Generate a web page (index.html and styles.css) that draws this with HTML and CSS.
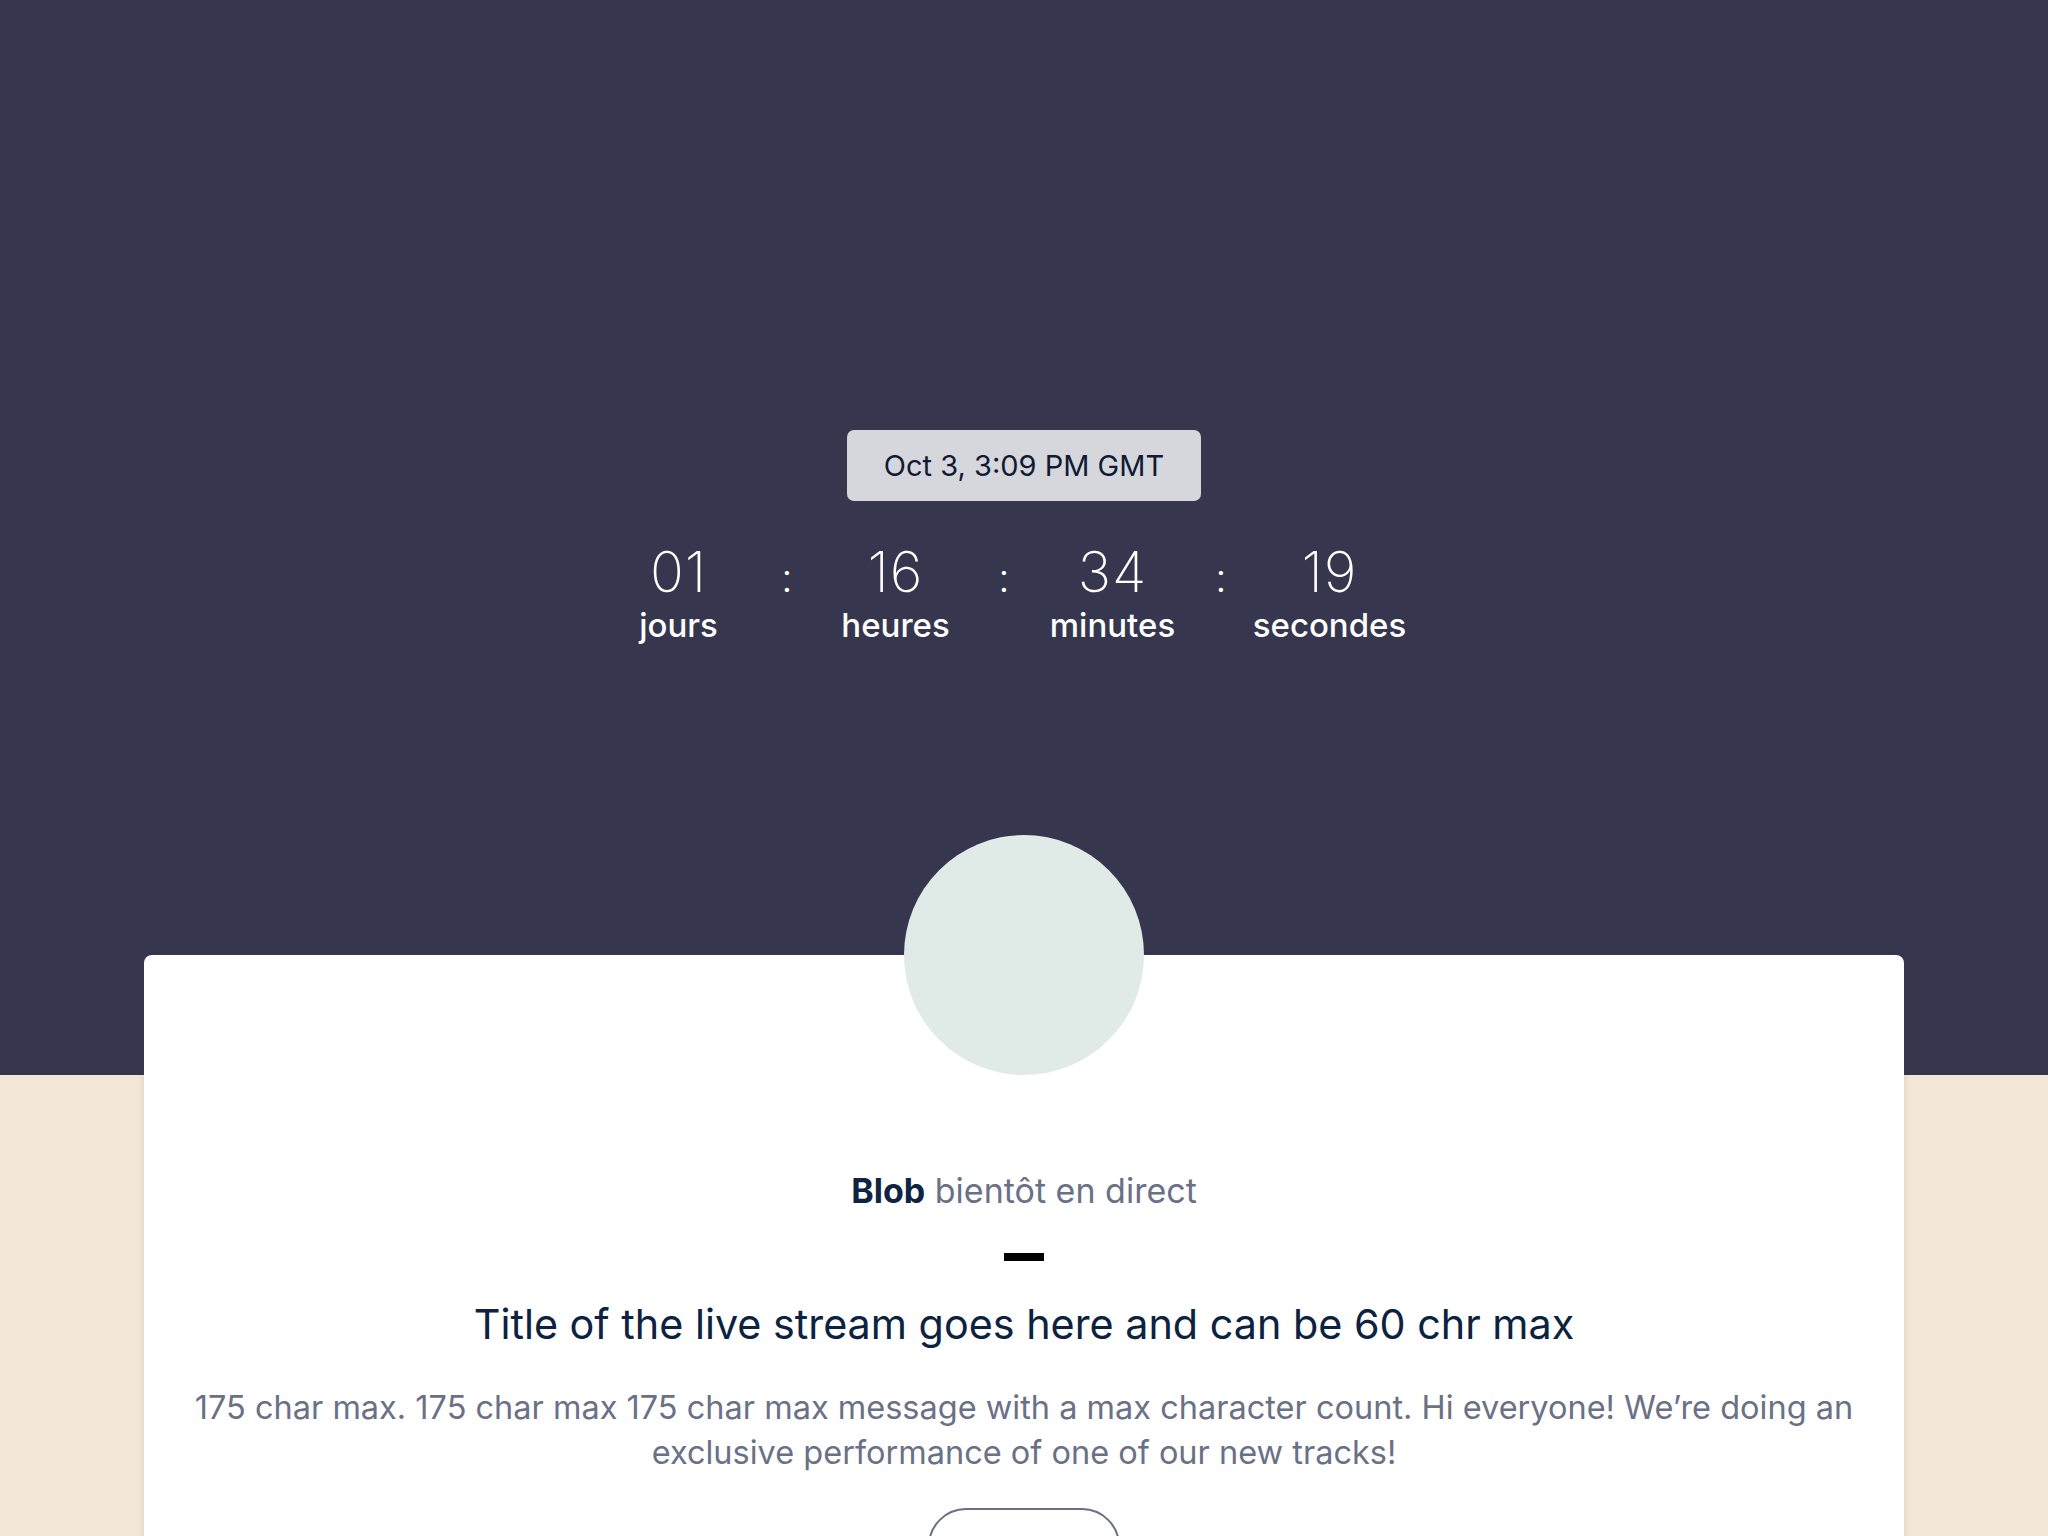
FILE: index.html
```html
<!DOCTYPE html>
<html lang="fr">
<head>
<meta charset="utf-8">
<title>Blob bientôt en direct</title>
<link rel="stylesheet" href="styles.css">
</head>
<body>
<header class="hero">
  <div class="date-pill">Oct 3, 3:09 PM GMT</div>
  <div class="countdown">
    <div class="unit"><span class="num">01</span><span class="label">jours</span></div>
    <span class="colon">:</span>
    <div class="unit"><span class="num">16</span><span class="label">heures</span></div>
    <span class="colon">:</span>
    <div class="unit"><span class="num">34</span><span class="label">minutes</span></div>
    <span class="colon">:</span>
    <div class="unit"><span class="num">19</span><span class="label">secondes</span></div>
  </div>
</header>
<main class="card">
  <div class="avatar"></div>
  <p class="host"><strong>Blob</strong> bientôt en direct</p>
  <div class="dash"></div>
  <h1 class="title">Title of the live stream goes here and can be 60 chr max</h1>
  <p class="desc">175 char max. 175 char max 175 char max message with a max character count. Hi everyone! We’re doing an exclusive performance of one of our new tracks!</p>
  <button class="btn" type="button"></button>
</main>
</body>
</html>
```
FILE: styles.css
```css
html, body {
  margin: 0;
  padding: 0;
}
body {
  background: #f2e6d7;
  font-family: Inter, "Noto Sans", sans-serif;
  overflow: hidden;
  height: 1536px;
}
.hero {
  background: #36374f;
  height: 1075px;
  display: flex;
  flex-direction: column;
  align-items: center;
  padding-top: 430px;
  box-sizing: border-box;
}
.date-pill {
  background: #d6d7dc;
  color: #101a33;
  border-radius: 7px;
  width: 354px;
  height: 71px;
  display: flex;
  align-items: center;
  justify-content: center;
  font-size: 29px;
  font-weight: 400;
  box-sizing: border-box;
}
.countdown {
  display: flex;
  align-items: flex-start;
  margin-top: 43px;
  margin-right: 40px;
  color: #ffffff;
}
.unit {
  width: 150px;
  display: flex;
  flex-direction: column;
  align-items: center;
}
.num {
  font-size: 56px;
  font-weight: 200;
  line-height: 56px;
  letter-spacing: 1px;
}
.label {
  font-size: 33px;
  font-weight: 500;
  line-height: 40px;
  margin-top: 5px;
}
.colon {
  width: 67px;
  text-align: center;
  font-size: 40px;
  font-weight: 300;
  line-height: 56px;
  padding-top: 6px;
}
.card {
  position: relative;
  background: #ffffff;
  margin: -120px 144px 0;
  border-radius: 8px;
  box-shadow: 0 0 6px rgba(60, 40, 20, 0.12);
  padding: 215px 30px 0;
  display: flex;
  flex-direction: column;
  align-items: center;
  text-align: center;
  min-height: 700px;
}
.avatar {
  position: absolute;
  top: -120px;
  left: 50%;
  width: 240px;
  height: 240px;
  margin-left: -120px;
  border-radius: 50%;
  background: #e0ebe7;
}
.host {
  margin: 0;
  font-size: 34px;
  line-height: 41px;
  color: #6a7187;
}
.host strong {
  color: #0e2442;
  font-weight: 700;
}
.dash {
  width: 40px;
  height: 8px;
  background: #000000;
  margin-top: 42px;
}
.title {
  margin: 38px 0 0;
  font-size: 41.3px;
  font-weight: 400;
  line-height: 50px;
  color: #0c2240;
}
.desc {
  margin: 36px 0 0;
  font-size: 32.5px;
  line-height: 45px;
  color: #6a7187;
  max-width: 1700px;
}
.btn {
  margin-top: 33px;
  width: 192px;
  height: 76px;
  border: 2px solid #6a7187;
  border-radius: 38px;
  background: #ffffff;
}
```
